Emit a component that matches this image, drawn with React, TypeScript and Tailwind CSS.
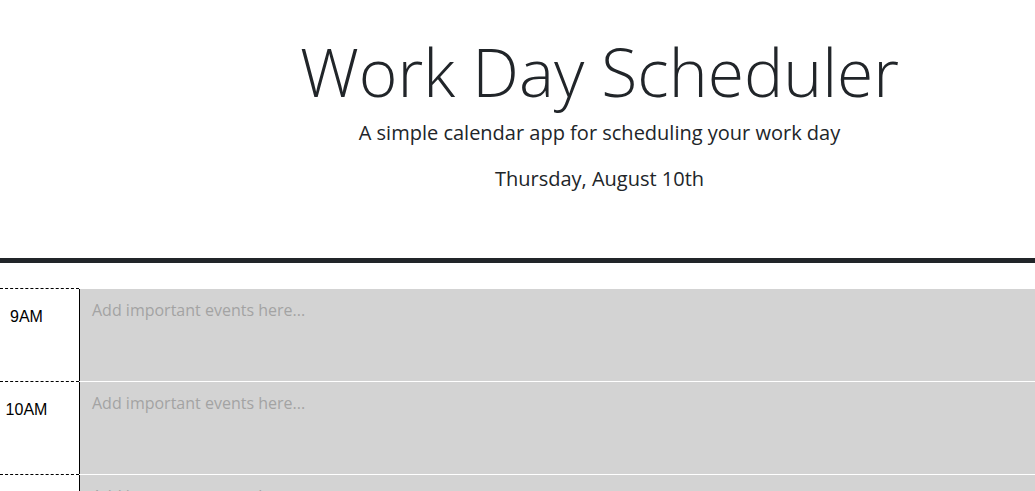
import React from "react";

const hours = ["9AM", "10AM", "11AM", "12PM", "1PM", "2PM", "3PM", "4PM", "5PM"];

export default function App() {
  return (
    <div className="min-h-screen bg-white text-[#212529] [font-family:'Open_Sans',sans-serif]">
      <header className="pl-[164px] pt-[32px] pb-[64px] text-center border-b-[5px] border-[#212529]">
        <h1 className="text-[66px] leading-[1.2] font-light">Work Day Scheduler</h1>
        <p className="mt-[7px] text-[20px] leading-[1.5] font-normal">
          A simple calendar app for scheduling your work day
        </p>
        <p className="mt-[16px] text-[20px] leading-[1.5] font-normal">Thursday, August 10th</p>
      </header>
      <main className="pt-[25px]">
        {hours.map((h) => (
          <div key={h} className="flex h-[93px] border-t border-white">
            <div className="w-[79px] shrink-0 -mt-px border-t border-dashed border-black bg-white pr-[26px] pt-[16px] text-center text-[16px] leading-[1.5] text-black [font-family:'Liberation_Sans',Arial,sans-serif]">
              {h}
            </div>
            <textarea
              className="flex-1 resize-none border-l border-black bg-[#d3d3d3] pl-[12px] pr-[10px] pt-[9px] pb-[10px] text-[16px] leading-[1.5] text-white outline-none placeholder:text-[#a3a3a3] [font-family:'Open_Sans',sans-serif]"
              placeholder="Add important events here..."
            />
          </div>
        ))}
      </main>
    </div>
  );
}
